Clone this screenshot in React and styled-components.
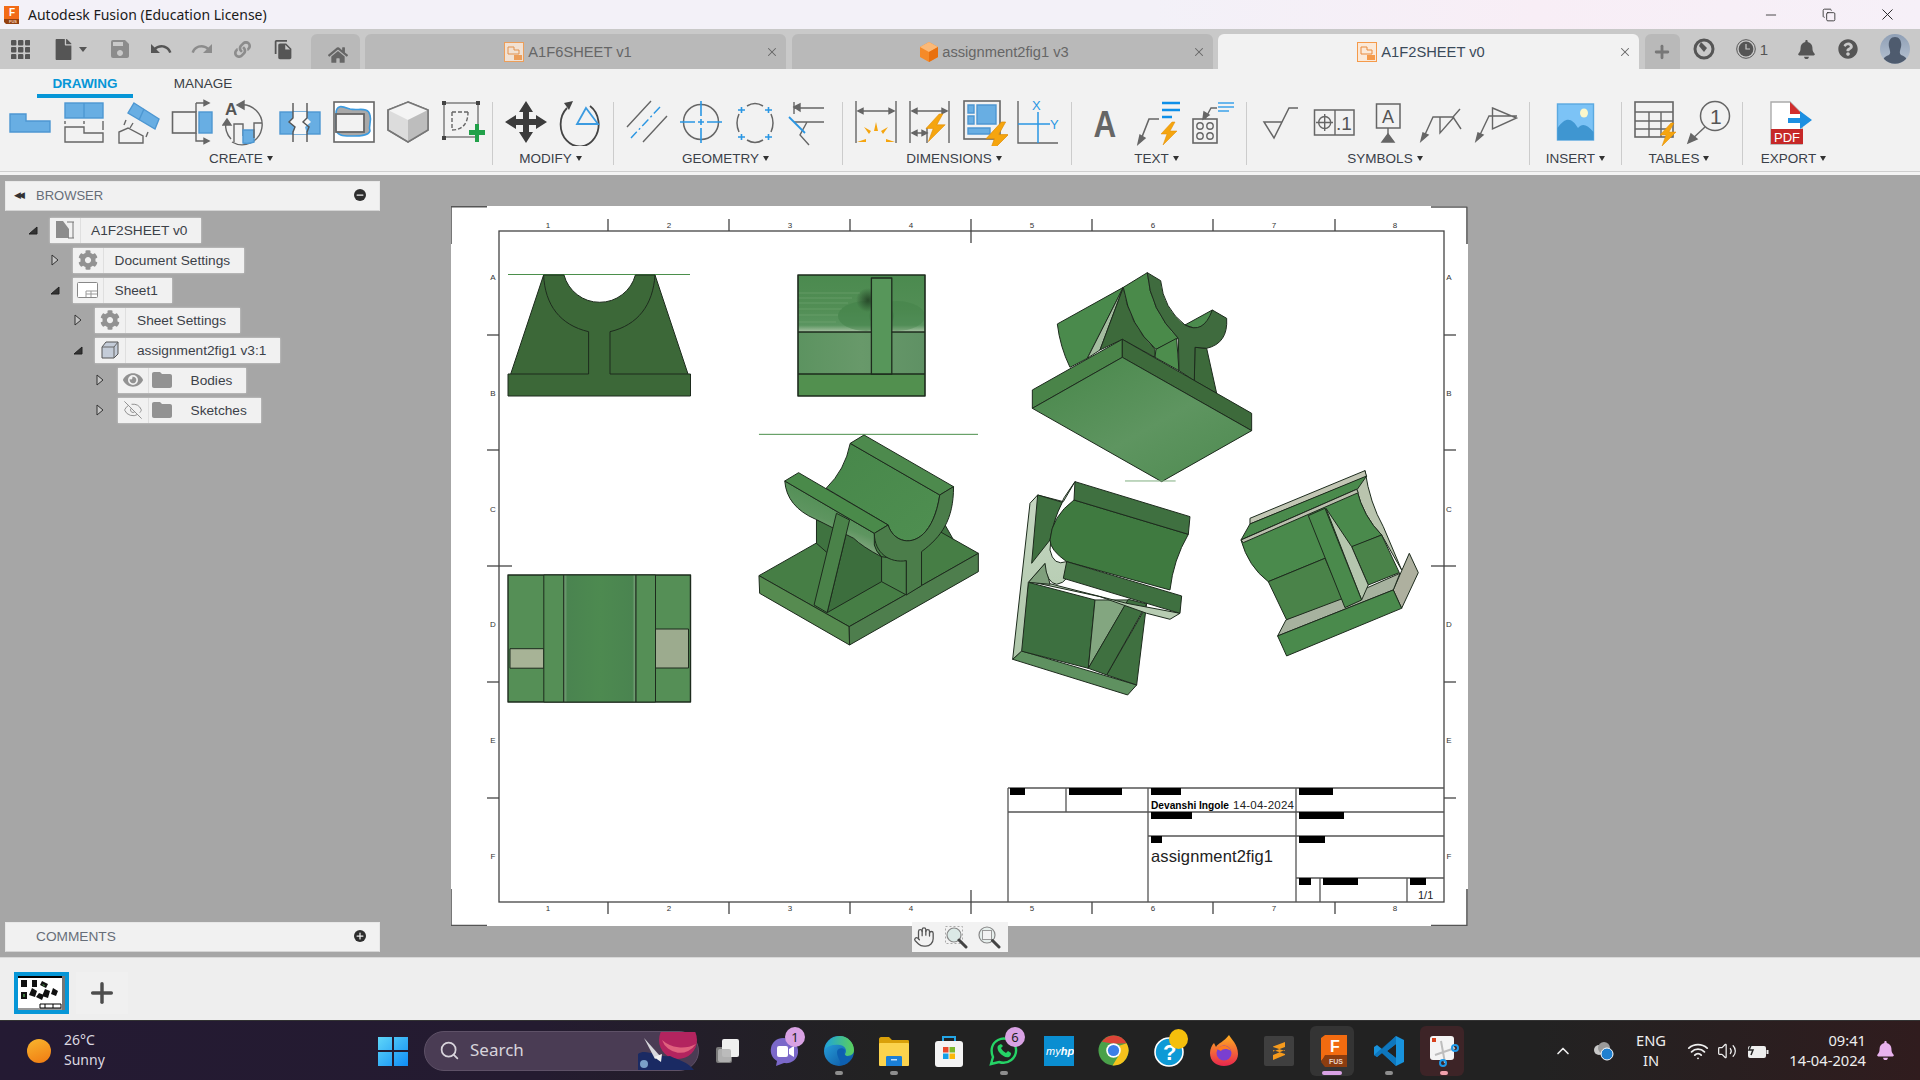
import React from 'react'
import styled, { createGlobalStyle } from 'styled-components'
import { FaHome, FaCog, FaEye, FaBell, FaQuestionCircle, FaLink, FaFile } from 'react-icons/fa'
import { MdUndo, MdRedo, MdSave, MdFileCopy, MdFolder } from 'react-icons/md'
import { X, Minus, Plus, Search, Hand, ChevronUp, Wifi, Volume2, EyeOff, Copy } from 'lucide-react'

const GlobalStyle = createGlobalStyle`
  html, body { margin: 0; padding: 0; background: #a6a6a6; }
  body { font-family: "Liberation Sans", Arial, sans-serif; overflow: hidden; }
  * { box-sizing: border-box; }
`

const Page = styled.div`
  width: 1920px;
  height: 1080px;
  display: flex;
  flex-direction: column;
  overflow: hidden;
`

/* window title */
const TitleBar = styled.div`
  height: 29px;
  display: flex;
  align-items: center;
  background: linear-gradient(90deg, #f3f1f8 0%, #f3f1f8 60%, #f8eef6 80%, #f6f0f8 100%);
  padding: 0 4px 0 3px;
`
const TitleText = styled.span`
  font-family: "Noto Sans", sans-serif;
  font-size: 14px;
  color: #1a1a1a;
  margin-left: 8px;
  flex: 1;
`
const WinButton = styled.div`
  width: 58px;
  display: flex;
  justify-content: center;
  color: #222;
`

/* document tabs */
const TabStrip = styled.div`
  height: 40px;
  background: #c9c9c9;
  display: flex;
  padding-top: 5px;
`
const QuickBar = styled.div`
  width: 311px;
  margin-top: -5px;
  display: flex;
  align-items: center;
`
const QuickBtn = styled.div`
  width: ${p => p.$w || 41}px;
  display: flex;
  justify-content: center;
  align-items: center;
  color: ${p => (p.$dim ? '#8c8c8c' : '#555')};
`
const Caret = styled.span`
  width: 0;
  height: 0;
  border-left: 4px solid transparent;
  border-right: 4px solid transparent;
  border-top: 5px solid #555;
  margin-left: 5px;
`
const HomeTab = styled.div`
  width: 49px;
  margin-right: 5px;
  background: #b9b9b9;
  border-radius: 6px 6px 0 0;
  color: #666;
  display: flex;
  align-items: center;
  justify-content: center;
  padding: 7px 0 0 4px;
`
const DocTab = styled.div`
  width: 421px;
  margin-right: 5.5px;
  padding: 1px 0 0 6px;
  background: ${p => (p.$active ? '#f2f2f2' : '#b9b9b9')};
  color: ${p => (p.$active ? '#3b4a5a' : '#666')};
  border-radius: 6px 6px 0 0;
  display: flex;
  align-items: center;
  font-size: 14.7px;
`
const DocTabLabel = styled.div`
  flex: 1;
  display: flex;
  align-items: center;
  justify-content: center;
  gap: 4px;
`
const DocTabClose = styled.div`
  width: 14px;
  margin-right: 7px;
  display: flex;
  justify-content: center;
  color: #666;
`
const AddTab = styled.div`
  width: 35px;
  background: #b9b9b9;
  border-radius: 6px 6px 0 0;
  color: #777;
  display: flex;
  justify-content: center;
  align-items: center;
`
const StatusIcons = styled.div`
  flex: 1;
  margin-top: -5px;
  display: flex;
  align-items: center;
  color: #555;
`
const StatusIcon = styled.div`
  width: ${p => p.$w}px;
  padding-left: ${p => p.$pl || 0}px;
  display: flex;
  align-items: center;
  justify-content: center;
  font-size: 15px;
  gap: 4px;
`

/* ribbon */
const Ribbon = styled.div`
  height: 106px;
  background: #f2f2f2;
  box-shadow: inset 0 -3px 0 #f4f4f4, inset 0 -4px 0 #cfcfcf;
`
const RibbonTabs = styled.div`
  height: 29px;
  display: flex;
  padding-left: 37px;
`
const RibbonTab = styled.div`
  width: ${p => p.$w}px;
  text-align: center;
  font-size: 13.5px;
  font-weight: ${p => (p.$active ? 700 : 400)};
  color: ${p => (p.$active ? '#0696d7' : '#3a3f45')};
  padding-top: 7px;
  height: 29px;
  border-bottom: ${p => (p.$active ? '4px solid #0696d7' : '0')};
`
const RibbonGroups = styled.div`
  display: flex;
  height: 67px;
`
const Group = styled.div`
  width: ${p => p.$w}px;
  border-right: ${p => (p.$last ? '0' : '1px solid #cccccc')};
  display: flex;
  flex-direction: column;
  align-items: center;
  margin-top: 4px;
`
const GroupIcons = styled.div`
  display: flex;
  height: 48px;
  margin-top: -4px;
`
const RibbonBtn = styled.div`
  width: 54px;
  display: flex;
  justify-content: center;
`
const GroupLabel = styled.div`
  font-size: 13.5px;
  color: #3a4048;
  display: flex;
  align-items: center;
  gap: 4px;
  margin: 5px ${p => p.$shift || 0}px 0 ${p => p.$push || 0}px;
  line-height: 15px;
`
const SmallCaret = styled.span`
  width: 0;
  height: 0;
  border-left: 3px solid transparent;
  border-right: 3px solid transparent;
  border-top: 5px solid #333;
`

/* main canvas */
const Canvas = styled.div`
  height: 782px;
  background: #a6a6a6;
  display: flex;
`
const SidePanels = styled.div`
  width: 451px;
  padding: 6px 0 5px 5px;
  display: flex;
  flex-direction: column;
`
const PanelHeader = styled.div`
  width: 375px;
  height: 30px;
  background: #f1f1f1;
  border: 1px solid #e8e8e8;
  border-bottom-color: #d4d4d4;
  display: flex;
  align-items: center;
  padding: 0 13px 2px ${p => p.$pad}px;
  color: #666d78;
  font-size: ${p => p.$fs}px;
`
const PanelTitle = styled.span`
  flex: 1;
`
const CollapseArrows = styled.span`
  width: 22px;
  font-size: 9px;
  letter-spacing: -3px;
  color: #333;
`
const RoundBtn = styled.span`
  width: 12px;
  height: 12px;
  border-radius: 50%;
  background: #2e2e2e;
  color: #f1f1f1;
  display: flex;
  align-items: center;
  justify-content: center;
`
const Tree = styled.div`
  flex: 1;
  display: flex;
  flex-direction: column;
  gap: 5px;
  margin-top: 6.5px;
`
const TreeRow = styled.div`
  display: flex;
  align-items: center;
  height: 25px;
  padding-left: ${p => 19 + p.$level * 22.5}px;
`
const Twist = styled.div`
  width: 26px;
  display: flex;
  justify-content: center;
  padding-right: 9px;
`
const Chip = styled.div`
  height: 25px;
  background: #f1f1f1;
  display: flex;
  align-items: center;
  font-size: 13.7px;
  color: #3c4148;
  box-shadow: 0 0 2px rgba(255, 255, 255, 0.5);
`
const ChipCell = styled.div`
  width: ${p => p.$w || 31}px;
  height: 25px;
  display: flex;
  align-items: center;
  justify-content: center;
  color: #929292;
  border-right: ${p => (p.$plain ? '0' : '1px solid #dfdfdf')};
`
const ChipLabel = styled.span`
  padding: 0 14px 0 ${p => p.$pad || 10}px;
  white-space: nowrap;
`
const SheetColumn = styled.div`
  width: 1017px;
  padding-top: 31px;
  display: flex;
  flex-direction: column;
  align-items: center;
`
const Sheet = styled.div`
  width: 1017px;
  height: 720px;
  background: #fff;
`
const SheetSvg = styled.svg`
  display: block;
`
const ViewNav = styled.div`
  width: 96px;
  height: 30px;
  margin-top: -4px;
  background: #f2f2f2;
  display: flex;
  align-items: center;
  gap: 9px;
  padding-left: 1px;
  color: #555;
  position: relative;
`

/* sheet thumbnails */
const SheetBar = styled.div`
  height: 63px;
  background: #eeeeee;
  border-top: 1px solid #d8d8d8;
  display: flex;
  align-items: center;
  padding: 8px 0 0 14px;
`
const Thumb = styled.div`
  width: 55px;
  height: 42px;
  border: 4px solid #0696d7;
  background: #fff;
`
const AddSheet = styled.div`
  width: 52px;
  height: 42px;
  margin-left: 7px;
  background: #f0f0f0;
  color: #4d4d4d;
  display: flex;
  align-items: center;
  justify-content: center;
`

/* windows taskbar */
const Taskbar = styled.div`
  height: 60px;
  background: linear-gradient(90deg, #241a33 0%, #241b30 28%, #222222 46%, #222222 80%, #301c1e 100%);
  border-top: 1px solid #333;
  display: flex;
  align-items: center;
  color: #e6e6e6;
  font-family: "Noto Sans", sans-serif;
`
const Weather = styled.div`
  width: 361px;
  padding-left: 27px;
  display: flex;
  align-items: center;
  gap: 13px;
`
const SunDisc = styled.div`
  width: 24px;
  height: 24px;
  border-radius: 50%;
  background: linear-gradient(160deg, #f8b62e, #f07a12);
`
const WeatherText = styled.div`
  font-size: 14px;
  line-height: 20px;
  color: #dcd8e0;
  margin-top: -2px;
`
const StartBtn = styled.div`
  width: 63px;
  display: flex;
  justify-content: center;
`
const SearchPill = styled.div`
  width: 275px;
  height: 40px;
  border-radius: 20px;
  background: #4a3c54;
  border: 1px solid #5e5167;
  display: flex;
  align-items: center;
  padding-left: 14px;
  gap: 10px;
  font-size: 17px;
  color: #d8d4dc;
  margin-right: 2px;
`
const SearchLabel = styled.span`
  flex: 1;
  margin-top: -2px;
`
const TaskIcon = styled.div`
  width: 55px;
  height: 58px;
  display: flex;
  align-items: center;
  justify-content: center;
  position: relative;
  &::before {
    content: '';
    display: ${p => (p.$tile ? 'block' : 'none')};
    position: absolute;
    left: 4px;
    right: 7px;
    top: 4px;
    bottom: 4px;
    border-radius: 6px;
    background: ${p => p.$tile};
  }
  &::after {
    content: '';
    display: ${p => (p.$dot ? 'block' : 'none')};
    position: absolute;
    left: 50%;
    bottom: 5px;
    width: ${p => (p.$dot === 'wide' ? 20 : 8)}px;
    height: 4px;
    margin-left: ${p => (p.$dot === 'wide' ? -12 : -4)}px;
    border-radius: 2px;
    background: ${p => (p.$dot === 'wide' ? '#d9a2e4' : p.$dot === 'pink' ? '#f0a0ac' : '#8e8e8e')};
  }
  svg { position: relative; }
`
const CountBadge = styled.span`
  position: absolute;
  right: 6px;
  top: 5px;
  width: 20px;
  height: 20px;
  border-radius: 50%;
  background: #d9a2e4;
  color: #222;
  font-size: 13px;
  text-align: center;
  line-height: 20px;
`
const YellowBadge = styled.span`
  position: absolute;
  right: 8px;
  top: 7px;
  width: 19px;
  height: 20px;
  border-radius: 50%;
  background: #f5bf0c;
`
const Tray = styled.div`
  margin-left: auto;
  display: flex;
  align-items: center;
  padding-right: 20px;
`
const TrayIcon = styled.div`
  width: ${p => p.$w}px;
  display: flex;
  justify-content: center;
  color: #eee;
`
const LangBox = styled.div`
  width: 46px;
  margin: -2px 5px 0 0;
  text-align: center;
  font-size: 14.7px;
  line-height: 20px;
  color: #eee;
`
const Clock = styled.div`
  width: 86px;
  text-align: right;
  font-size: 14.7px;
  line-height: 20px;
  color: #eee;
  margin: -2px 4px 0 1px;
`

/* ---- ribbon drawings, all on a 48 x 48 grid ---- */
const BLUE = '#68aee3'
const BLUE_LINE = '#4d97d2'
const GR = '#666'
const ORANGE = '#f5a50f'

function Ic({ children }) {
  return (
    <svg width="48" height="48" viewBox="0 0 48 48" fill="none" stroke={GR} strokeWidth="1.4">
      {children}
    </svg>
  )
}
const Bolt = ({ t }) => (
  <path transform={t} d="M11 0 L0 12 H6 L2 23 L16 9 H9 L14 0Z" fill={ORANGE} stroke="#e08b00" strokeWidth=".5" />
)

const BaseIcon = () => (
  <Ic><path d="M4 16H20V23H44V34H4Z" fill={BLUE} stroke={BLUE_LINE} /></Ic>
)
const ProjectedIcon = () => (
  <Ic>
    <rect x="5" y="5" width="38" height="15" fill={BLUE} stroke={BLUE_LINE} />
    <path d="M24 5V20" stroke={BLUE_LINE} />
    <path d="M5 29H24V35H43V44H5Z" />
    <path d="M5 23V26M24 23V26M43 23V32" />
  </Ic>
)
const AuxiliaryIcon = () => (
  <Ic>
    <path d="M20 5L45 21L41 31L14 15Z" fill={BLUE} stroke={BLUE_LINE} />
    <path d="M30 11L25 22" stroke={BLUE_LINE} />
    <path d="M5 45V34L14 30L29 38V45Z" />
    <path d="M12 22L10 27M19 25L16 30M34 34L32 39" />
  </Ic>
)
const SectionIcon = () => (
  <Ic>
    <rect x="4.5" y="14" width="23.5" height="21" strokeWidth="1.6" />
    <rect x="31" y="14" width="13" height="21" fill={BLUE} stroke={BLUE_LINE} />
    <path d="M28 5H38M28 5V14M28 35V43H38" />
    <path d="M36 2.5L41 5L36 7.5ZM36 40.5L41 43L36 45.5Z" fill={GR} />
  </Ic>
)
const DetailIcon = () => (
  <Ic>
    <path d="M17 7A20 20 0 1 1 10 44" />
    <path d="M4 24A20 20 0 0 0 9 41" />
    <path d="M22 3L15 7L22 11Z M1 27L5 21L9 27Z" fill={GR} />
    <text x="3" y="17" fontFamily="Liberation Sans" fontWeight="700" fontSize="17" fill="#555" stroke="none">A</text>
    <path d="M12 44V26H21V38H21" />
    <path d="M21 32H32V44A20 20 0 0 1 21 45Z" fill={BLUE} stroke={BLUE_LINE} />
    <path d="M32 40V25H40" />
  </Ic>
)
const BreakIcon = () => (
  <Ic>
    <rect x="4" y="14" width="40" height="22" fill={BLUE} stroke={BLUE_LINE} />
    <path d="M17 14H31V20L35 24L29 29L31 36H17L19 29L13 24L17 20Z" fill="#f7f7f7" stroke="none" />
    <path d="M17 5V20L13 24L19 29L17 34V44M31 5V20L27 24L33 29L31 34V44" strokeWidth="1.4" stroke="#555" />
  </Ic>
)
const CropIcon = () => (
  <Ic>
    <rect x="4" y="4" width="40" height="40" fill="#fff" strokeWidth="1.6" />
    <path d="M6 16C6 5 14 9 20 11C28 13 38 8 40 17C42 24 38 28 40 33C38 39 26 38 20 38C14 38 6 38 6 30Z" fill="#a9a9a9" stroke="#3c9be0" strokeWidth="1.6" />
    <rect x="6" y="16" width="28" height="18" fill="#f2f2f2" strokeWidth="1.8" stroke="#666" />
  </Ic>
)
const CubeIcon = () => (
  <Ic>
    <path d="M24 4L44 12V32L24 44L4 32V12Z" fill="#dcdcdc" stroke="#777" />
    <path d="M24 4L44 12L24 22L4 12Z" fill="#f4f4f4" stroke="none" />
    <path d="M24 22L44 12V32L24 44Z" fill="#bdbdbd" stroke="none" />
    <path d="M24 4L44 12V32L24 44L4 32V12Z" stroke="#777" strokeWidth="1.6" />
  </Ic>
)
const AddViewIcon = () => (
  <Ic>
    <rect x="6" y="5" width="34" height="34" stroke="#777" />
    <rect x="4" y="3" width="4" height="4" fill="#444" stroke="none" />
    <rect x="38" y="3" width="4" height="4" fill="#444" stroke="none" />
    <rect x="4" y="38" width="4" height="4" fill="#444" stroke="none" />
    <path d="M14 14H30M14 14V32M14 32C24 32 30 26 30 14" stroke="#666" strokeDasharray="4 2" />
    <path d="M31 32H37V26H41V32H47V37H41V44H37V37H31Z" fill="#22a14a" stroke="none" />
  </Ic>
)
const MoveIcon = () => (
  <Ic>
    <path d="M24 3L31 14H27V21H34V17L45 24L34 31V27H27V34H31L24 45L17 34H21V27H14V31L3 24L14 17V21H21V14H17Z" fill="#3c3c3c" stroke="none" />
  </Ic>
)
const RotateIcon = () => (
  <Ic>
    <path d="M11 10A19 22 0 1 0 34 8" strokeWidth="1.8" stroke="#444" />
    <path d="M8 5L17 3L13 12Z" fill="#444" stroke="none" />
    <path d="M30 10L42 26H21Z" stroke="#3c9be0" strokeWidth="1.8" />
  </Ic>
)
const CenterlineIcon = () => (
  <Ic>
    <path d="M28 3L4 29M44 18L20 44" strokeWidth="1.4" />
    <path d="M37 9L8 40" stroke="#2a96e3" strokeWidth="1.4" strokeDasharray="9 3 2 3" />
  </Ic>
)
const CenterMarkIcon = () => (
  <Ic>
    <circle cx="24" cy="24" r="17.5" strokeWidth="1.5" />
    <path d="M24 3V18M24 21V27M24 30V45M3 24H18M21 24H27M30 24H45" stroke="#2a96e3" strokeWidth="1.6" />
  </Ic>
)
const PatternIcon = () => (
  <Ic>
    <path d="M16 8Q24 3 32 8M16 42Q24 47 32 42M8 16Q4 25 8 34M40 16Q44 25 40 34" strokeWidth="1.5" />
    <path d="M7 12H14M10.5 9V15M34 12H41M37.5 9V15M7 39H14M10.5 36V42M34 39H41M37.5 36V42" stroke="#2a96e3" strokeWidth="1.6" />
  </Ic>
)
const ExtensionIcon = () => (
  <Ic>
    <path d="M9 4V16M9 10H39M9 24H39M22 24L15 37L24 47" />
    <path d="M9 9L15 6V13Z" fill={GR} />
    <path d="M4 19L20 35" stroke="#2a96e3" strokeWidth="1.8" />
  </Ic>
)
const DimIcon = () => (
  <Ic>
    <path d="M4 3V45M44 3V45M6 13H42" />
    <path d="M6 13L11 10.5V15.5ZM42 13L37 10.5V15.5Z" fill={GR} />
    <path d="M24 24L22 33L26 33ZM12 29L17 36L19 33ZM36 29L31 36L29 33ZM5 44L14 41L14 44ZM43 44L34 41L34 44Z" fill={ORANGE} stroke="none" />
  </Ic>
)
const DimAutoIcon = () => (
  <Ic>
    <path d="M4 3V45M43 3V45M6 13H41M6 35H21M21 30V45" />
    <path d="M6 13L11 10.5V15.5ZM41 13L36 10.5V15.5ZM6 35L11 32.5V37.5ZM21 35L16 32.5V37.5Z" fill={GR} />
    <Bolt t="translate(20 16) scale(1.2)" />
  </Ic>
)
const DimLayoutIcon = () => (
  <Ic>
    <rect x="4" y="3" width="36" height="38" strokeWidth="1.6" />
    <path d="M8 7H14V15H8ZM8 18H14V26H8ZM17 7H36V26H17ZM8 30H30V36H8Z" fill={BLUE} stroke={BLUE_LINE} />
    <Bolt t="translate(26 24) scale(1.4)" />
  </Ic>
)
const OrdinateIcon = () => (
  <Ic>
    <path d="M4 3V45H44" />
    <path d="M24 14V45M4 26H36" stroke="#2a96e3" strokeWidth="1.5" />
    <text x="18" y="12" fontSize="13" fontFamily="Liberation Sans" fill="#2a96e3" stroke="none">X</text>
    <text x="36" y="31" fontSize="13" fontFamily="Liberation Sans" fill="#2a96e3" stroke="none">Y</text>
  </Ic>
)
const TextIcon = () => (
  <Ic>
    <text x="28.2" y="39" textAnchor="middle" fontSize="37" fontFamily="Liberation Sans" fontWeight="700" fill="#666" stroke="none" transform="scale(.85 1)">A</text>
  </Ic>
)
const LeaderTextIcon = () => (
  <Ic>
    <path d="M5 44L14 21H24" strokeWidth="1.6" />
    <path d="M3 46L5 37L10 40Z" fill={GR} />
    <path d="M27 5H45M27 12H45M27 19H37" stroke="#0d8fe8" strokeWidth="2.4" />
    <Bolt t="translate(26 24)" />
  </Ic>
)
const HoleNoteIcon = () => (
  <Ic>
    <g transform="translate(-5 0)">
      <rect x="9" y="21" width="24" height="24" strokeWidth="1.6" />
      <circle cx="16" cy="28" r="3.2" /><circle cx="26" cy="28" r="3.2" />
      <circle cx="16" cy="38" r="3.2" /><circle cx="26" cy="38" r="3.2" />
      <path d="M21 21L27 10H33" />
      <path d="M19 21L20 14L25 17Z" fill={GR} />
      <path d="M34 5H50M34 9H50M34 13H45" stroke="#3da3ea" strokeWidth="1.5" />
    </g>
  </Ic>
)
const SurfaceIcon = () => (
  <Ic><path d="M8 24H26L18 40ZM18 40L33 10H42" strokeWidth="1.5" /></Ic>
)
const FcfIcon = () => (
  <Ic>
    <rect x="4.5" y="12" width="39.5" height="25" strokeWidth="1.5" />
    <path d="M25 12V37" />
    <circle cx="14.7" cy="24.5" r="6" />
    <path d="M14.7 16V33M6 24.5H23" />
    <text x="26" y="32" fontSize="19" fontFamily="Liberation Sans" fill="#555" stroke="none">.1</text>
  </Ic>
)
const DatumIcon = () => (
  <Ic>
    <rect x="12.5" y="6" width="23.5" height="24" strokeWidth="1.5" />
    <text x="18" y="25" fontSize="18" fontFamily="Liberation Sans" fill="#555" stroke="none">A</text>
    <path d="M24 30V38" />
    <path d="M24 36L30 44H18Z" fill={GR} />
  </Ic>
)
const WeldIcon = () => (
  <Ic>
    <path d="M5 41L15 19H35L42 11M35 19L43 31M22 19V35L36 19" strokeWidth="1.4" />
    <path d="M3 43L5 35L10 37Z" fill={GR} />
  </Ic>
)
const DatumTargetIcon = () => (
  <Ic>
    <path d="M6 41L17 18H45M20.5 10L44.5 20L20.5 31Z" strokeWidth="1.4" />
    <path d="M4 43L6 35L11 37Z" fill={GR} />
  </Ic>
)
const ImageIcon = () => (
  <Ic>
    <rect x="5.5" y="6" width="36" height="36" fill="#7cc3f6" stroke="#5ba9e0" />
    <path d="M5.5 42V30C14 18 20 20 26 30C30 25 35 26 41.5 34V42Z" fill="#3f96d1" stroke="none" />
    <ellipse cx="32" cy="15" rx="4" ry="4.5" fill="#fbf7cb" stroke="none" />
  </Ic>
)
const TableIcon = () => (
  <Ic>
    <rect x="4" y="4" width="38" height="35" strokeWidth="1.6" />
    <path d="M4 14H42M4 23H42M4 31H38M18 14V39M30 14V39" />
    <Bolt t="translate(29 25) scale(1)" />
  </Ic>
)
const BalloonIcon = () => (
  <Ic>
    <circle cx="30" cy="18" r="14.5" strokeWidth="1.5" />
    <text x="25" y="26" fontSize="21" fontFamily="Liberation Sans" fill="#555" stroke="none">1</text>
    <path d="M20 29L5 43" />
    <path d="M3 45L6 36L12 41Z" fill={GR} />
  </Ic>
)
const PdfIcon = () => (
  <Ic>
    <path d="M5 4H24L36 16V46H5Z" fill="#fff" stroke="#aaa" />
    <path d="M24 4L36 16H24Z" fill="#d12e2e" stroke="none" />
    <rect x="5" y="31" width="32" height="15" fill="#c62828" stroke="none" />
    <text x="8" y="43.5" fontSize="13" fontFamily="Liberation Sans" fill="#fff" stroke="none">PDF</text>
    <path d="M22 20H34V13L46 22L34 31V25H22Z" fill="#1d8fe1" stroke="none" />
  </Ic>
)

/* ---- the drawing sheet ---- */
const FRAME_TICKS_X = [608, 729, 850, 971, 1092, 1213, 1335]
const FRAME_TICKS_Y = [335, 450, 566, 682, 798]
const COLS = [548, 669, 790, 911, 1032, 1153, 1274, 1395]
const ROWS = [['A', 280], ['B', 396], ['C', 512], ['D', 627], ['E', 743], ['F', 859]]

function Border() {
  return (
    <g fill="none" stroke="#444" strokeWidth="1.3">
      <rect x="499" y="231" width="945" height="671" />
      {FRAME_TICKS_X.map(x => {
        const mid = x === 971
        return (
          <g key={x}>
            <path d={`M${x} 219V${mid ? 243 : 231}`} />
            <path d={`M${x} ${mid ? 890 : 902}V914`} />
          </g>
        )
      })}
      {FRAME_TICKS_Y.map(y => {
        const mid = y === 566
        return (
          <g key={y}>
            <path d={`M487 ${y}H${mid ? 512 : 499}`} />
            <path d={`M${mid ? 1431 : 1444} ${y}H1456`} />
          </g>
        )
      })}
      <path d="M451 244V206.8H487M451 889V925.5H487M1431 207H1467V244M1431 925.5H1467V889" stroke="#555" strokeWidth="1.6" />
      <g fill="#333" stroke="none" fontSize="8" fontFamily="Liberation Sans" textAnchor="middle">
        {COLS.map((x, i) => (
          <g key={x}>
            <text x={x} y="228">{i + 1}</text>
            <text x={x} y="911">{i + 1}</text>
          </g>
        ))}
        {ROWS.map(([l, y]) => (
          <g key={l}>
            <text x="493" y={y}>{l}</text>
            <text x="1449" y={y}>{l}</text>
          </g>
        ))}
      </g>
    </g>
  )
}

const REDACTED = [
  [1010, 788, 15, 7], [1069, 788, 53, 7], [1151, 788, 30, 7], [1299, 788, 34, 7],
  [1151, 812, 41, 7], [1299, 812, 45, 7], [1151, 836, 11, 7], [1299, 836, 26, 7],
  [1299, 878, 12, 7], [1323, 878, 35, 7], [1410, 878, 16, 7],
]

function TitleBlock() {
  return (
    <g>
      <path
        d="M1008 788H1444M1008 812H1444M1148 836H1444M1296 878H1444M1008 788V902M1066 788V812M1148 788V902M1296 788V902M1320 878V902M1407 878V902"
        fill="none" stroke="#555" strokeWidth="1.3"
      />
      {REDACTED.map(([x, y, w, h]) => <rect key={x + '-' + y} x={x} y={y} width={w} height={h} fill="#000" />)}
      <g fontFamily="Liberation Sans" fill="#222">
        <text x="1151" y="809" fontSize="11" fontWeight="700" textLength="78" lengthAdjust="spacingAndGlyphs" fill="#000">Devanshi Ingole</text>
        <text x="1233" y="809" fontSize="11.5" textLength="61">14-04-2024</text>
        <text x="1151" y="862" fontSize="16.5" textLength="122">assignment2fig1</text>
        <text x="1418" y="899" fontSize="11">1/1</text>
      </g>
    </g>
  )
}

// the zoomed crops were read at these scales, so the views keep crop coordinates
const E = { stroke: '#1d2b1d', strokeWidth: 1, vectorEffect: 'non-scaling-stroke', strokeLinejoin: 'round' }
const F = ({ d, fill }) => <path d={d} fill={fill} {...E} />

function Gradients() {
  return (
    <defs>
      <linearGradient id="topA" x1="0" y1="0" x2="0" y2="1">
        <stop offset="0" stopColor="#4b8a4f" />
        <stop offset=".6" stopColor="#528e55" />
        <stop offset=".88" stopColor="#5a9560" />
        <stop offset="1" stopColor="#a9c3a4" />
      </linearGradient>
      <linearGradient id="topB" x1="0" y1="0" x2="1" y2="0">
        <stop offset="0" stopColor="#5c9360" />
        <stop offset=".5" stopColor="#68996a" />
        <stop offset="1" stopColor="#5f9164" />
      </linearGradient>
      <radialGradient id="ribShade" cx=".5" cy=".5" r=".5">
        <stop offset="0" stopColor="#1e3a20" stopOpacity=".8" />
        <stop offset="1" stopColor="#1e3a20" stopOpacity="0" />
      </radialGradient>
      <linearGradient id="botC" x1="0" y1="0" x2="1" y2="0">
        <stop offset="0" stopColor="#7fa880" />
        <stop offset=".05" stopColor="#4a8450" />
        <stop offset=".5" stopColor="#4d8a50" />
        <stop offset=".95" stopColor="#4a8450" />
        <stop offset="1" stopColor="#85ab85" />
      </linearGradient>
      <linearGradient id="cradle" x1="0" y1="0" x2="1" y2="1">
        <stop offset="0" stopColor="#47874a" />
        <stop offset=".88" stopColor="#4e8e50" />
        <stop offset="1" stopColor="#93b78f" />
      </linearGradient>
      <linearGradient id="under" x1=".7" y1=".1" x2=".3" y2=".9">
        <stop offset="0" stopColor="#4a8a4e" />
        <stop offset=".55" stopColor="#5e9560" />
        <stop offset="1" stopColor="#aebda6" />
      </linearGradient>
      <linearGradient id="plate" x1="0" y1="0" x2="1" y2="1">
        <stop offset="0" stopColor="#478649" />
        <stop offset=".55" stopColor="#5e9560" />
        <stop offset="1" stopColor="#4e8a50" />
      </linearGradient>
      <linearGradient id="lightFace" x1="0" y1="0" x2="0" y2="1">
        <stop offset="0" stopColor="#c8d8c4" />
        <stop offset="1" stopColor="#adc6a9" />
      </linearGradient>
    </defs>
  )
}

function FlatViews() {
  return (
    <g>
      {/* front */}
      <path d="M508 274.5H690" stroke="#4b8f4b" strokeWidth="1" />
      <path d="M543.6 275L510.7 374H508V396H690.5V374H688L655 275H635.4A37 37 0 0 1 564 275Z" fill="#3c6838" {...E} />
      <path d="M543.6 275C545 305 560 325 588.6 331.7V374H510.7M655 275C653 305 638 325 610 331.7V374H688" fill="none" {...E} />
      {/* top */}
      <rect x="798" y="275" width="127" height="57" fill="url(#topA)" />
      <path d="M798 293H860M798 298H852M798 303H848M798 309H842M798 315H838M798 322H836" stroke="#76a877" strokeWidth="1" opacity=".55" />
      <ellipse cx="866" cy="316" rx="28" ry="15" fill="#3f7f45" opacity=".45" />
      <ellipse cx="897" cy="316" rx="28" ry="15" fill="#3f7f45" opacity=".35" />
      <ellipse cx="868" cy="300" rx="12" ry="12" fill="url(#ribShade)" />
      <rect x="798" y="332" width="127" height="42" fill="url(#topB)" />
      <rect x="798" y="374" width="127" height="22" fill="#52904f" />
      <path d="M798 332H925M798 374H925" {...E} strokeWidth="1.4" />
      <rect x="798" y="275" width="127" height="121" fill="none" {...E} strokeWidth="1.6" />
      <rect x="871.4" y="278" width="20.4" height="96" fill="#57965a" {...E} strokeWidth="1.3" />
      {/* bottom */}
      <rect x="508" y="575" width="182.5" height="127" fill="#558f56" {...E} strokeWidth="1.4" />
      <rect x="510" y="648.7" width="33.8" height="19.5" fill="#a7b396" {...E} />
      <rect x="655.5" y="629" width="33" height="39" fill="#9cab8e" {...E} />
      <rect x="543.8" y="575" width="20" height="127" fill="#558f56" {...E} />
      <rect x="563.8" y="575" width="72.2" height="127" fill="url(#botC)" {...E} />
      <rect x="636" y="575" width="19.5" height="127" fill="#558f56" {...E} />
    </g>
  )
}

function IsoFront() {
  return (
    <g transform="translate(480 420) scale(.3444 .3333)">
      <path d="M810 43H1446" stroke="#4b8f4b" strokeWidth="1" vectorEffect="non-scaling-stroke" />
      <F d="M1345 305L1375 360L1280 415L1285 385Z" fill="#3f7240" />
      <F d="M810 467L1185 247L1447 400L1072 620Z" fill="#467e45" />
      <F d="M810 467L1072 620L1073 675L812 520Z" fill="#568b50" />
      <F d="M1072 620L1447 400L1447 455L1073 675Z" fill="#4e7e4d" />
      <F d="M977 300L1035 320L1010 400L977 370Z" fill="#3f7340" />
      <F d="M1073 300L1166 410L1166 485L1008 578Z" fill="#3c6e3d" />
      <F d="M1166 410L1238 422L1238 525L1166 485Z" fill="#4a804a" />
      <F d="M885 183L1145 340V375Q1150 395 1165 410Q1110 380 1085 355L975 298Q890 260 885 183Z" fill="url(#under)" />
      <F d="M970 555L1035 280L1073 300L1008 578Z" fill="#4a8249" />
      <F d="M1075 70Q1060 150 1005 205L1185 315C1205 385 1310 395 1335 225Z" fill="url(#cradle)" />
      <F d="M1075 70L1115 45L1375 200L1335 225Z" fill="#4d8a4d" />
      <F d="M885 183L925 158L1185 315L1145 340Z" fill="#4a8a4a" />
      <F d="M1185 315C1205 385 1310 395 1335 225L1375 200C1375 300 1340 350 1282 395V497L1238 525V422C1190 430 1145 400 1145 340Z" fill="#4b7d4a" />
    </g>
  )
}

function IsoUnder() {
  return (
    <g transform="translate(1000 250) scale(.3333)">
      <F d="M555 225L637 180Q640 232 600 240Z" fill="url(#cradle)" />
      <F d="M172 222L370 112L262 325L210 352Q180 290 172 222Z" fill="#4a8a4c" />
      <F d="M370 112L300 300L262 325Z" fill="#a5bda0" />
      <F d="M370 112Q385 220 465 298V322L367 268L300 300Z" fill="#3d6a3b" />
      <F d="M370 112L442 68Q450 180 535 265L468 298Q390 230 370 112Z" fill="#4a8a4a" />
      <F d="M468 298L530 265L537 362L465 322Z" fill="#4d8d4d" />
      <F d="M620 295L650 430L583 392L585 292Z" fill="#3d6a3b" />
      <F d="M442 68L482 92Q490 175 555 225Q610 255 637 180L680 205Q685 280 620 295L585 292L583 392L537 362L535 265Q450 180 442 68Z" fill="#3f6b3e" />
      <F d="M97 420L367 268L367 322L97 475Z" fill="#4a8449" />
      <F d="M367 268L755 490V542L367 322Z" fill="#3d6a3b" />
      <F d="M97 475L367 322L755 542L485 695Z" fill="url(#plate)" />
      <path d="M375 693H527" stroke="#7fae7f" strokeWidth="1" vectorEffect="non-scaling-stroke" />
    </g>
  )
}

function IsoLeft() {
  return (
    <g transform="translate(1000 250) scale(.3333)">
      <F d="M38 1228L65 1203L410 1305L383 1335Z" fill="#5f9160" />
      <F d="M430 1085L440 1060L410 1305L320 1275Z" fill="#3f7040" />
      <F d="M85 997L285 1050L265 1255L62 1203Z" fill="#3d7040" />
      <F d="M285 1050L385 1050L265 1255Z" fill="#83a680" />
      <F d="M385 1048L440 1062L320 1275L265 1255Z" fill="#3f7040" />
      <F d="M90 995L145 1000L380 1060L540 1090L510 1108L440 1090L300 1040Z" fill="#b7ccb2" />
      <F d="M85 997L135 940L150 1003Z" fill="#7f9f7c" />
      <F d="M113 735L90 760L38 1228L65 1203L85 997L135 940Q140 1000 170 1003Q190 1000 200 985V935Q160 950 150 900Q150 790 225 695L190 755Z" fill="url(#lightFace)" />
      <F d="M113 735L187 757Q160 810 150 870L95 940Z" fill="#3f7040" />
      <F d="M222 750L565 853Q520 930 510 1020L200 935Q150 900 150 870Q155 800 222 750Z" fill="#3f7a40" />
      <F d="M225 695L570 800L565 853L222 750Z" fill="#3f7040" />
      <F d="M200 935L545 1038L540 1090L190 985Z" fill="#3f7040" />
    </g>
  )
}

function IsoRight() {
  return (
    <g transform="translate(1000 250) scale(.3333)">
      <F d="M1180 1020L1228 910L1255 968L1205 1075Z" fill="#aeb09f" />
      <F d="M1095 662Q1110 760 1150 830L1205 960L1145 855Q1090 800 1070 718Z" fill="#b9c4ae" />
      <F d="M750 805L1095 662L1100 680L750 822Z" fill="#c2c6b4" />
      <F d="M750 822L1100 678L1072 718L723 870Z" fill="#4a8a4c" />
      <F d="M723 870Q745 950 805 995L1145 855Q1090 800 1070 718Z" fill="#4a8a4c" />
      <F d="M723 870L1070 718L1075 728L730 878Z" fill="#bbbfae" />
      <F d="M805 995L975 925L1030 1050L860 1110Z" fill="#4a8349" />
      <F d="M1055 890L1145 855L1198 968L1105 1005Z" fill="#4a8349" />
      <F d="M833 1158L858 1110L1030 1045L1200 970L1180 1020Z" fill="#a7b29f" />
      <F d="M978 775L1055 890L1105 1005L1085 1050Z" fill="#b5c6ae" />
      <F d="M925 797L975 775L1085 1050L1035 1073Z" fill="#4a8a4c" />
      <F d="M833 1158L1180 1020L1205 1075L860 1218Z" fill="#4a8a4c" />
    </g>
  )
}

function SheetDrawing() {
  return (
    <SheetSvg width="1017" height="720" viewBox="451 206 1017 720">
      <Gradients />
      <Border />
      <FlatViews />
      <IsoUnder />
      <IsoFront />
      <IsoLeft />
      <IsoRight />
      <TitleBlock />
    </SheetSvg>
  )
}

/* ---- small shared glyphs ---- */
const FusionLogo = ({ size = 20 }) => (
  <svg width={size * 0.85} height={size} viewBox="0 0 17 20">
    <path d="M1 1H16V14H5L1 17Z" fill="#f26b16" />
    <path d="M1 14H16V19H3L1 17Z" fill="#93400f" />
    <text x="6" y="11" fontSize="10" fontWeight="700" fontFamily="Liberation Sans" fill="#fff">F</text>
    <text x="6" y="18" fontSize="4" fontWeight="700" fontFamily="Liberation Sans" fill="#f3d2b8">FUS</text>
  </svg>
)
const DrawingDocIcon = ({ dim }) => (
  <svg width="20" height="20" viewBox="0 0 20 20" opacity={dim ? 0.85 : 1}>
    <rect x="0.5" y="0.5" width="19" height="19" fill="#fbe9d8" stroke="#f59a4a" />
    <path d="M4 5H10V8H15V12H4Z" fill="none" stroke="#e98a3c" />
    <rect x="10" y="13" width="8" height="5" fill="#f59a4a" />
  </svg>
)
const ModelDocIcon = () => (
  <svg width="18" height="20" viewBox="0 0 18 20">
    <path d="M9 0L18 5V15L9 20L0 15V5Z" fill="#f58a29" />
    <path d="M9 0L18 5L9 10L0 5Z" fill="#fbb978" />
    <path d="M9 10L18 5V15L9 20Z" fill="#e8700f" />
  </svg>
)
const OpenTwist = () => (
  <svg width="10" height="9" viewBox="0 0 10 9"><path d="M9 1V8H1Z" fill="#333" stroke="#222" strokeWidth="1" /></svg>
)
const ClosedTwist = () => (
  <svg width="8" height="12" viewBox="0 0 8 12"><path d="M1 1L7 6L1 11Z" fill="#c4c4c4" stroke="#333" strokeWidth="1" /></svg>
)
const ZoomWindowIcon = () => (
  <svg width="24" height="24" viewBox="0 0 24 24">
    <rect x="1.5" y="1.5" width="17" height="17" fill="none" stroke="#aaa" strokeDasharray="2 2" />
    <circle cx="10" cy="10" r="7" fill="#dbe9e6" stroke="#888" strokeWidth="1.2" />
    <path d="M15 15L22 22" stroke="#444" strokeWidth="3" strokeLinecap="round" />
  </svg>
)
const ZoomFitIcon = () => (
  <svg width="24" height="24" viewBox="0 0 24 24">
    <circle cx="10" cy="10" r="8" fill="#e6eeec" stroke="#888" strokeWidth="1.2" />
    <rect x="5.5" y="5.5" width="9" height="9" fill="#f2f2f2" stroke="#999" />
    <path d="M15.5 15.5L22 22" stroke="#444" strokeWidth="3" strokeLinecap="round" />
  </svg>
)

function BrowserTree() {
  const settings = <ChipCell><FaCog size={20} /></ChipCell>
  return (
    <Tree>
      <TreeRow $level={0}>
        <Twist><OpenTwist /></Twist>
        <Chip>
          <ChipCell>
            <svg width="20" height="20" viewBox="0 0 20 20"><path d="M1 1H8L14 9V18H1Z" fill="#8c8c8c" /><path d="M12 2H19M18 2V18M13 18H19" stroke="#777" fill="none" /></svg>
          </ChipCell>
          <ChipLabel>A1F2SHEET v0</ChipLabel>
        </Chip>
      </TreeRow>
      <TreeRow $level={1}>
        <Twist><ClosedTwist /></Twist>
        <Chip>{settings}<ChipLabel $pad={11}>Document Settings</ChipLabel></Chip>
      </TreeRow>
      <TreeRow $level={1}>
        <Twist><OpenTwist /></Twist>
        <Chip>
          <ChipCell>
            <svg width="21" height="16" viewBox="0 0 21 16"><rect x=".5" y=".5" width="20" height="15" rx="1" fill="#fff" stroke="#888" /><path d="M9 15V9H20M9 12H20M14 9V15" stroke="#999" fill="none" /></svg>
          </ChipCell>
          <ChipLabel $pad={11}>Sheet1</ChipLabel>
        </Chip>
      </TreeRow>
      <TreeRow $level={2}>
        <Twist><ClosedTwist /></Twist>
        <Chip>{settings}<ChipLabel $pad={11}>Sheet Settings</ChipLabel></Chip>
      </TreeRow>
      <TreeRow $level={2}>
        <Twist><OpenTwist /></Twist>
        <Chip>
          <ChipCell>
            <svg width="18" height="18" viewBox="0 0 18 18"><path d="M1 6L5 1H17V13L13 17H1Z" fill="#c4ccd8" stroke="#555" /><path d="M1 6H13V17M13 6L17 1" stroke="#666" fill="none" /></svg>
          </ChipCell>
          <ChipLabel $pad={11}>assignment2fig1 v3:1</ChipLabel>
        </Chip>
      </TreeRow>
      <TreeRow $level={3}>
        <Twist><ClosedTwist /></Twist>
        <Chip>
          <ChipCell><FaEye size={20} /></ChipCell>
          <ChipCell $w={27} $plain><MdFolder size={24} /></ChipCell>
          <ChipLabel $pad={15}>Bodies</ChipLabel>
        </Chip>
      </TreeRow>
      <TreeRow $level={3}>
        <Twist><ClosedTwist /></Twist>
        <Chip>
          <ChipCell><EyeOff size={20} strokeWidth={1.2} /></ChipCell>
          <ChipCell $w={27} $plain><MdFolder size={24} /></ChipCell>
          <ChipLabel $pad={15}>Sketches</ChipLabel>
        </Chip>
      </TreeRow>
    </Tree>
  )
}

function SheetThumb() {
  return (
    <svg width="47" height="34" viewBox="0 0 47 34" style={{ display: 'block' }}>
      <rect width="47" height="34" fill="#fff" />
      <rect x="0" y="0" width="47" height="2" fill="#000" />
      <rect x="0" y="32" width="47" height="2" fill="#9a9a9a" />
      <rect x="44" y="0" width="3" height="34" fill="#777" />
      <path d="M3 4H9V11H3ZM14 4H19V11H14ZM24 5L30 8L28 12L22 9ZM3 16H9V23H3ZM14 12L19 15L17 21L11 19ZM27 13L32 15L30 22L24 20ZM35 12L40 15L38 20L33 18ZM21 17L26 19L24 24L18 21Z" fill="#111" />
      <path d="M24 8L27 9L26 11ZM5 18H7V21H5Z" fill="#3f7a40" />
      <path d="M22 28H43V32H22ZM27 28V32M35 28V32" fill="none" stroke="#000" strokeWidth="1" />
    </svg>
  )
}

/* ---- taskbar glyphs ---- */
const WinLogo = () => (
  <svg width="30" height="30" viewBox="0 0 30 30">
    <defs>
      <linearGradient id="win" x1="0" y1="0" x2="1" y2="1">
        <stop offset="0" stopColor="#5fd6f8" /><stop offset="1" stopColor="#0f8cf5" />
      </linearGradient>
    </defs>
    <path d="M0 1H14V14H0ZM16 1H30V14H16ZM0 16H14V30H0ZM16 16H30V30H16Z" fill="url(#win)" />
  </svg>
)
const SearchArt = () => (
  <svg width="60" height="38" viewBox="0 0 60 38">
    <circle cx="40" cy="8" r="19" fill="#b3245f" />
    <path d="M24 8A19 19 0 0 0 58 12A30 30 0 0 1 24 8Z" fill="#e0627e" />
    <path d="M0 38V22C8 16 20 26 32 24C40 28 50 30 56 38Z" fill="#1a2a63" />
    <path d="M6 6L22 24L17 27Z" fill="#d8d8dc" />
    <path d="M16 25L24 22L23 30Z" fill="#f0f0f0" />
    <circle cx="6" cy="32" r="4" fill="#7aa0c8" />
  </svg>
)
const TaskView = () => (
  <svg width="30" height="30" viewBox="0 0 30 30">
    <rect x="2" y="11" width="16" height="16" rx="2" fill="#7a7a7a" />
    <rect x="8" y="3" width="17" height="18" rx="2" fill="#f0f0f0" />
    <rect x="4" y="13" width="13" height="13" rx="2" fill="#b5b5b5" opacity=".9" />
  </svg>
)
const TeamsIcon = () => (
  <svg width="30" height="30" viewBox="0 0 30 30">
    <path d="M14 2C24 2 30 9 29 17C28 24 22 28 15 27L7 30L8 25C3 22 1 17 2 12C3 6 8 2 14 2Z" fill="#7b68c9" />
    <rect x="8" y="10" width="11" height="11" rx="2" fill="#fff" />
    <path d="M20 13L25 10V21L20 18Z" fill="#fff" />
  </svg>
)
const EdgeIcon = () => (
  <svg width="32" height="32" viewBox="0 0 32 32">
    <defs>
      <linearGradient id="edge" x1="0" y1="0" x2="1" y2="1">
        <stop offset="0" stopColor="#2aa9e0" /><stop offset="1" stopColor="#0b4f9e" />
      </linearGradient>
      <linearGradient id="edgeTop" x1="0" y1="0" x2="1" y2="0">
        <stop offset="0" stopColor="#1fa4d8" /><stop offset="1" stopColor="#5cd05a" />
      </linearGradient>
    </defs>
    <circle cx="16" cy="16" r="15" fill="url(#edge)" />
    <path d="M2 14C4 4 12 1 17 1C25 1 31 8 31 15C31 21 24 22 21 20C25 17 23 11 17 10C10 9 5 11 2 14Z" fill="url(#edgeTop)" />
    <path d="M14 17C14 13 20 12 22 15C20 20 24 23 29 22C26 28 20 31 16 30C20 27 14 24 14 17Z" fill="#0d5fb0" />
  </svg>
)
const FilesIcon = () => (
  <svg width="32" height="30" viewBox="0 0 32 30">
    <path d="M1 3C1 2 2 1 3 1H11L14 4H30C31 4 31 5 31 6V10H1Z" fill="#d9a009" />
    <rect x="1" y="7" width="30" height="23" rx="1" fill="#fbd34d" />
    <path d="M9 20H23C24 20 24 21 24 22V30H8V22C8 21 8 20 9 20Z" fill="#1a7fd6" />
    <rect x="13" y="23" width="6" height="1.5" fill="#bfe0fa" />
  </svg>
)
const StoreIcon = () => (
  <svg width="30" height="34" viewBox="0 0 30 34">
    <path d="M9 8V3H21V8" fill="none" stroke="#23a6e6" strokeWidth="2" />
    <rect x="1" y="7" width="28" height="26" rx="3" fill="#f4f4f4" />
    <rect x="9" y="13" width="5.5" height="5.5" fill="#e8492c" />
    <rect x="15.5" y="13" width="5.5" height="5.5" fill="#7cb82a" />
    <rect x="9" y="19.5" width="5.5" height="5.5" fill="#14a0e8" />
    <rect x="15.5" y="19.5" width="5.5" height="5.5" fill="#fab80a" />
  </svg>
)
const WhatsAppIcon = () => (
  <svg width="32" height="32" viewBox="0 0 32 32">
    <path d="M3 29L5 22C2 15 4 8 10 5C18 1 27 6 28 14C29 23 20 30 11 27Z" fill="none" stroke="#25d366" strokeWidth="2.4" />
    <path d="M11 10C9 11 9 14 11 17C14 21 18 23 21 22C23 21 23 19 23 18L20 16L18 18C16 17 14 15 13 13L15 11L13 9Z" fill="#25d366" />
  </svg>
)
const MyHpIcon = () => (
  <svg width="30" height="30" viewBox="0 0 30 30">
    <rect width="30" height="30" fill="#0a8ed1" />
    <text x="2" y="19" fontSize="11" fontFamily="Liberation Sans" fontStyle="italic" fill="#fff">my<tspan fontWeight="700">hp</tspan></text>
  </svg>
)
const ChromeIcon = () => (
  <svg width="31" height="31" viewBox="0 0 32 32">
    <circle cx="16" cy="16" r="15.5" fill="#4aa14a" />
    <path d="M16 .5A15.5 15.5 0 0 1 29.5 8.5L16 9L4 7A15.5 15.5 0 0 1 16 .5Z" fill="#dc4437" />
    <path d="M29.5 8.5A15.5 15.5 0 0 1 15 31.5L22 20L22 11Z" fill="#f6c31c" />
    <circle cx="16" cy="16" r="7.5" fill="#fff" />
    <circle cx="16" cy="16" r="5.8" fill="#3b7fe8" />
  </svg>
)
const HelpIcon = () => (
  <svg width="30" height="32" viewBox="0 0 30 32">
    <circle cx="15" cy="17" r="14" fill="#0e9ad6" stroke="#fff" strokeWidth="1.6" />
    <text x="9" y="25" fontSize="22" fontWeight="700" fontFamily="Liberation Sans" fill="#fff">?</text>
  </svg>
)
const FirefoxIcon = () => (
  <svg width="30" height="32" viewBox="0 0 30 32">
    <defs>
      <linearGradient id="ff" x1="0" y1="0" x2="0" y2="1">
        <stop offset="0" stopColor="#ffb01f" /><stop offset="1" stopColor="#e8264e" />
      </linearGradient>
    </defs>
    <path d="M20 0C22 4 29 9 29 19C29 27 22 31 15 31C7 31 1 26 1 18C1 14 3 10 5 8L7 12C9 8 15 7 20 0Z" fill="url(#ff)" />
    <circle cx="15" cy="18" r="7.5" fill="#7a3fd0" />
    <path d="M8 14C12 9 20 10 22 16C18 13 13 14 12 16Z" fill="#ff7a1f" />
  </svg>
)
const SublimeIcon = () => (
  <svg width="30" height="30" viewBox="0 0 30 30">
    <rect width="30" height="30" rx="2" fill="#3f3f3f" />
    <path d="M21 6V11L9 15.5V10.5ZM21 14V19L9 24V19ZM9 14L21 18V15L9 11Z" fill="#f59a1c" />
  </svg>
)
const FusionTaskIcon = () => (
  <svg width="28" height="32" viewBox="0 0 28 32">
    <path d="M1 3L5 0H27V22H5L1 26Z" fill="#f26b10" />
    <path d="M5 20H27V32H5L1 27Z" fill="#8c3d10" />
    <text x="10" y="17" fontSize="16" fontWeight="700" fontFamily="Liberation Sans" fill="#fff">F</text>
    <text x="9" y="29" fontSize="7" fontWeight="700" fontFamily="Liberation Sans" fill="#e8d3c4">FUS</text>
  </svg>
)
const VSCodeIcon = () => (
  <svg width="30" height="30" viewBox="0 0 30 30">
    <path d="M22 0L30 4V26L22 30L8 17L3 21L0 19V11L3 9L8 13ZM22 8L13 15L22 22Z" fill="#1893dd" />
    <path d="M22 30L8 17L3 21L0 19L22 0V8L13 15L22 22Z" fill="#0a6bb0" opacity=".7" />
  </svg>
)
const SnipIcon = () => (
  <svg width="30" height="32" viewBox="0 0 30 32">
    <rect x="1" y="1" width="24" height="24" rx="3" fill="#f4f4f4" />
    <rect x="3" y="3" width="4" height="4" fill="#d8401c" />
    <path d="M6 20L26 13M12 6L16 28" stroke="#bdbdbd" strokeWidth="2" />
    <circle cx="14" cy="28" r="3" fill="none" stroke="#1d98e8" strokeWidth="2" />
    <circle cx="26" cy="13" r="3" fill="none" stroke="#1d98e8" strokeWidth="2" />
  </svg>
)

const GROUPS = [
  { name: 'CREATE', w: 493, shift: 10, icons: [BaseIcon, ProjectedIcon, AuxiliaryIcon, SectionIcon, DetailIcon, BreakIcon, CropIcon, CubeIcon, AddViewIcon] },
  { name: 'MODIFY', w: 121, shift: 5, icons: [MoveIcon, RotateIcon] },
  { name: 'GEOMETRY', w: 229, shift: 5, icons: [CenterlineIcon, CenterMarkIcon, PatternIcon, ExtensionIcon] },
  { name: 'DIMENSIONS', w: 229, shift: 6, icons: [DimIcon, DimAutoIcon, DimLayoutIcon, OrdinateIcon] },
  { name: 'TEXT', w: 175, shift: 5, icons: [TextIcon, LeaderTextIcon, HoleNoteIcon] },
  { name: 'SYMBOLS', w: 283, shift: 6, icons: [SurfaceIcon, FcfIcon, DatumIcon, WeldIcon, DatumTargetIcon] },
  { name: 'INSERT', w: 92, icons: [ImageIcon] },
  { name: 'TABLES', w: 121, shift: 6, icons: [TableIcon, BalloonIcon] },
  { name: 'EXPORT', w: 94, push: 7, icons: [PdfIcon], last: true },
]

export default function App() {
  return (
    <Page>
      <GlobalStyle />
      <TitleBar>
        <FusionLogo />
        <TitleText>Autodesk Fusion (Education License)</TitleText>
        <WinButton><Minus size={16} strokeWidth={1.2} /></WinButton>
        <WinButton><Copy size={14} strokeWidth={1.4} /></WinButton>
        <WinButton><X size={19} strokeWidth={1.2} /></WinButton>
      </TitleBar>

      <TabStrip>
        <QuickBar>
          <QuickBtn>
            <svg width="19" height="19" viewBox="0 0 19 19" fill="#555">
              {[0, 7, 14].flatMap(x => [0, 7, 14].map(y => <rect key={x + '' + y} x={x} y={y} width="5.4" height="5.4" rx="1" />))}
            </svg>
          </QuickBtn>
          <QuickBtn $w={58}><FaFile size={21} /><Caret /></QuickBtn>
          <QuickBtn $dim><MdSave size={24} /></QuickBtn>
          <QuickBtn><MdUndo size={24} /></QuickBtn>
          <QuickBtn $dim><MdRedo size={24} /></QuickBtn>
          <QuickBtn $dim><FaLink size={17} /></QuickBtn>
          <QuickBtn><MdFileCopy size={21} /></QuickBtn>
        </QuickBar>
        <HomeTab><FaHome size={20} /></HomeTab>
        <DocTab>
          <DocTabLabel><DrawingDocIcon dim />A1F6SHEET v1</DocTabLabel>
          <DocTabClose><X size={16} strokeWidth={1.8} /></DocTabClose>
        </DocTab>
        <DocTab>
          <DocTabLabel><ModelDocIcon />assignment2fig1 v3</DocTabLabel>
          <DocTabClose><X size={16} strokeWidth={1.8} /></DocTabClose>
        </DocTab>
        <DocTab $active>
          <DocTabLabel><DrawingDocIcon />A1F2SHEET v0</DocTabLabel>
          <DocTabClose><X size={16} strokeWidth={1.8} /></DocTabClose>
        </DocTab>
        <AddTab><Plus size={20} strokeWidth={3.4} /></AddTab>
        <StatusIcons>
          <StatusIcon $w={49}>
            <svg width="22" height="22" viewBox="0 0 22 22">
              <circle cx="11" cy="11" r="9" fill="none" stroke="#555" strokeWidth="3" />
              <path d="M8 4L14 10L11 14L6 8Z" fill="#555" />
            </svg>
          </StatusIcon>
          <StatusIcon $w={47}>
            <svg width="20" height="20" viewBox="0 0 20 20">
              <circle cx="10" cy="10" r="9.3" fill="none" stroke="#555" />
              <circle cx="10" cy="10" r="7.4" fill="#555" />
              <path d="M10 5V10H14" stroke="#c9c9c9" strokeWidth="1.2" fill="none" />
            </svg>
            1
          </StatusIcon>
          <StatusIcon $w={61}><FaBell size={19} /></StatusIcon>
          <StatusIcon $w={23}><FaQuestionCircle size={20} /></StatusIcon>
          <StatusIcon $w={60} $pl={10}>
            <svg width="30" height="30" viewBox="0 0 30 30">
              <defs>
                <linearGradient id="avatar" x1="0" y1="0" x2="0" y2="1">
                  <stop offset="0" stopColor="#8f9fb5" /><stop offset="1" stopColor="#b7c3d2" />
                </linearGradient>
              </defs>
              <circle cx="15" cy="15" r="15" fill="url(#avatar)" />
              <path d="M15 3C20 3 22 8 21 13C20 17 19 19 21 21C24 22 27 24 26 25A15 15 0 0 1 4 25C3 24 6 22 9 21C11 19 10 17 9 13C8 8 10 3 15 3Z" fill="#4e5b6e" />
            </svg>
          </StatusIcon>
        </StatusIcons>
      </TabStrip>

      <Ribbon>
        <RibbonTabs>
          <RibbonTab $active $w={96}>DRAWING</RibbonTab>
          <RibbonTab $w={140}>MANAGE</RibbonTab>
        </RibbonTabs>
        <RibbonGroups>
          {GROUPS.map(g => (
            <Group key={g.name} $w={g.w} $last={g.last}>
              <GroupIcons>
                {g.icons.map((I, i) => <RibbonBtn key={i}><I /></RibbonBtn>)}
              </GroupIcons>
              <GroupLabel $shift={g.shift} $push={g.push}>{g.name}<SmallCaret /></GroupLabel>
            </Group>
          ))}
        </RibbonGroups>
      </Ribbon>

      <Canvas>
        <SidePanels>
          <PanelHeader $pad={8} $fs={13}>
            <CollapseArrows>◀◀</CollapseArrows>
            <PanelTitle>BROWSER</PanelTitle>
            <RoundBtn><Minus size={10} strokeWidth={3} /></RoundBtn>
          </PanelHeader>
          <BrowserTree />
          <PanelHeader $pad={30} $fs={13.7}>
            <PanelTitle>COMMENTS</PanelTitle>
            <RoundBtn><Plus size={10} strokeWidth={3} /></RoundBtn>
          </PanelHeader>
        </SidePanels>
        <SheetColumn>
          <Sheet><SheetDrawing /></Sheet>
          <ViewNav>
            <Hand size={22} strokeWidth={1.4} />
            <ZoomWindowIcon />
            <ZoomFitIcon />
          </ViewNav>
        </SheetColumn>
      </Canvas>

      <SheetBar>
        <Thumb><SheetThumb /></Thumb>
        <AddSheet><Plus size={32} strokeWidth={2.6} /></AddSheet>
      </SheetBar>

      <Taskbar>
        <Weather>
          <SunDisc />
          <WeatherText>26°C<br />Sunny</WeatherText>
        </Weather>
        <StartBtn><WinLogo /></StartBtn>
        <SearchPill>
          <Search size={21} strokeWidth={2} />
          <SearchLabel>Search</SearchLabel>
          <SearchArt />
        </SearchPill>
        <TaskIcon><TaskView /></TaskIcon>
        <TaskIcon><TeamsIcon /><CountBadge>1</CountBadge></TaskIcon>
        <TaskIcon $dot="gray"><EdgeIcon /></TaskIcon>
        <TaskIcon $dot="gray"><FilesIcon /></TaskIcon>
        <TaskIcon><StoreIcon /></TaskIcon>
        <TaskIcon $dot="gray"><WhatsAppIcon /><CountBadge>6</CountBadge></TaskIcon>
        <TaskIcon><MyHpIcon /></TaskIcon>
        <TaskIcon><ChromeIcon /></TaskIcon>
        <TaskIcon><HelpIcon /><YellowBadge /></TaskIcon>
        <TaskIcon><FirefoxIcon /></TaskIcon>
        <TaskIcon><SublimeIcon /></TaskIcon>
        <TaskIcon $tile="#343434" $dot="wide"><FusionTaskIcon /></TaskIcon>
        <TaskIcon $dot="gray"><VSCodeIcon /></TaskIcon>
        <TaskIcon $tile="#3d2427" $dot="pink"><SnipIcon /></TaskIcon>
        <Tray>
          <TrayIcon $w={30}><ChevronUp size={20} strokeWidth={2} /></TrayIcon>
          <TrayIcon $w={50}>
            <svg width="22" height="20" viewBox="0 0 22 20">
              <circle cx="7" cy="9" r="5" fill="#c8c8c8" /><circle cx="12" cy="7" r="6" fill="#9a9a9a" />
              <circle cx="15" cy="13" r="6" fill="#1f80d0" stroke="#fff" />
            </svg>
          </TrayIcon>
          <LangBox>ENG<br />IN</LangBox>
          <TrayIcon $w={38}><Wifi size={22} strokeWidth={2} /></TrayIcon>
          <TrayIcon $w={20}><Volume2 size={20} strokeWidth={1.5} /></TrayIcon>
          <TrayIcon $w={42}>
            <svg width="22" height="16" viewBox="0 0 22 16">
              <rect x="1" y="3" width="18" height="12" rx="2" fill="#eee" />
              <rect x="19.5" y="7" width="2" height="4" fill="#eee" />
              <path d="M5 0L2 7H6L4 12" stroke="#222" strokeWidth="1.5" fill="none" />
            </svg>
          </TrayIcon>
          <Clock>09:41<br />14-04-2024</Clock>
          <TrayIcon $w={30}><FaBell size={19} color="#e9b2ee" /></TrayIcon>
        </Tray>
      </Taskbar>
    </Page>
  )
}
